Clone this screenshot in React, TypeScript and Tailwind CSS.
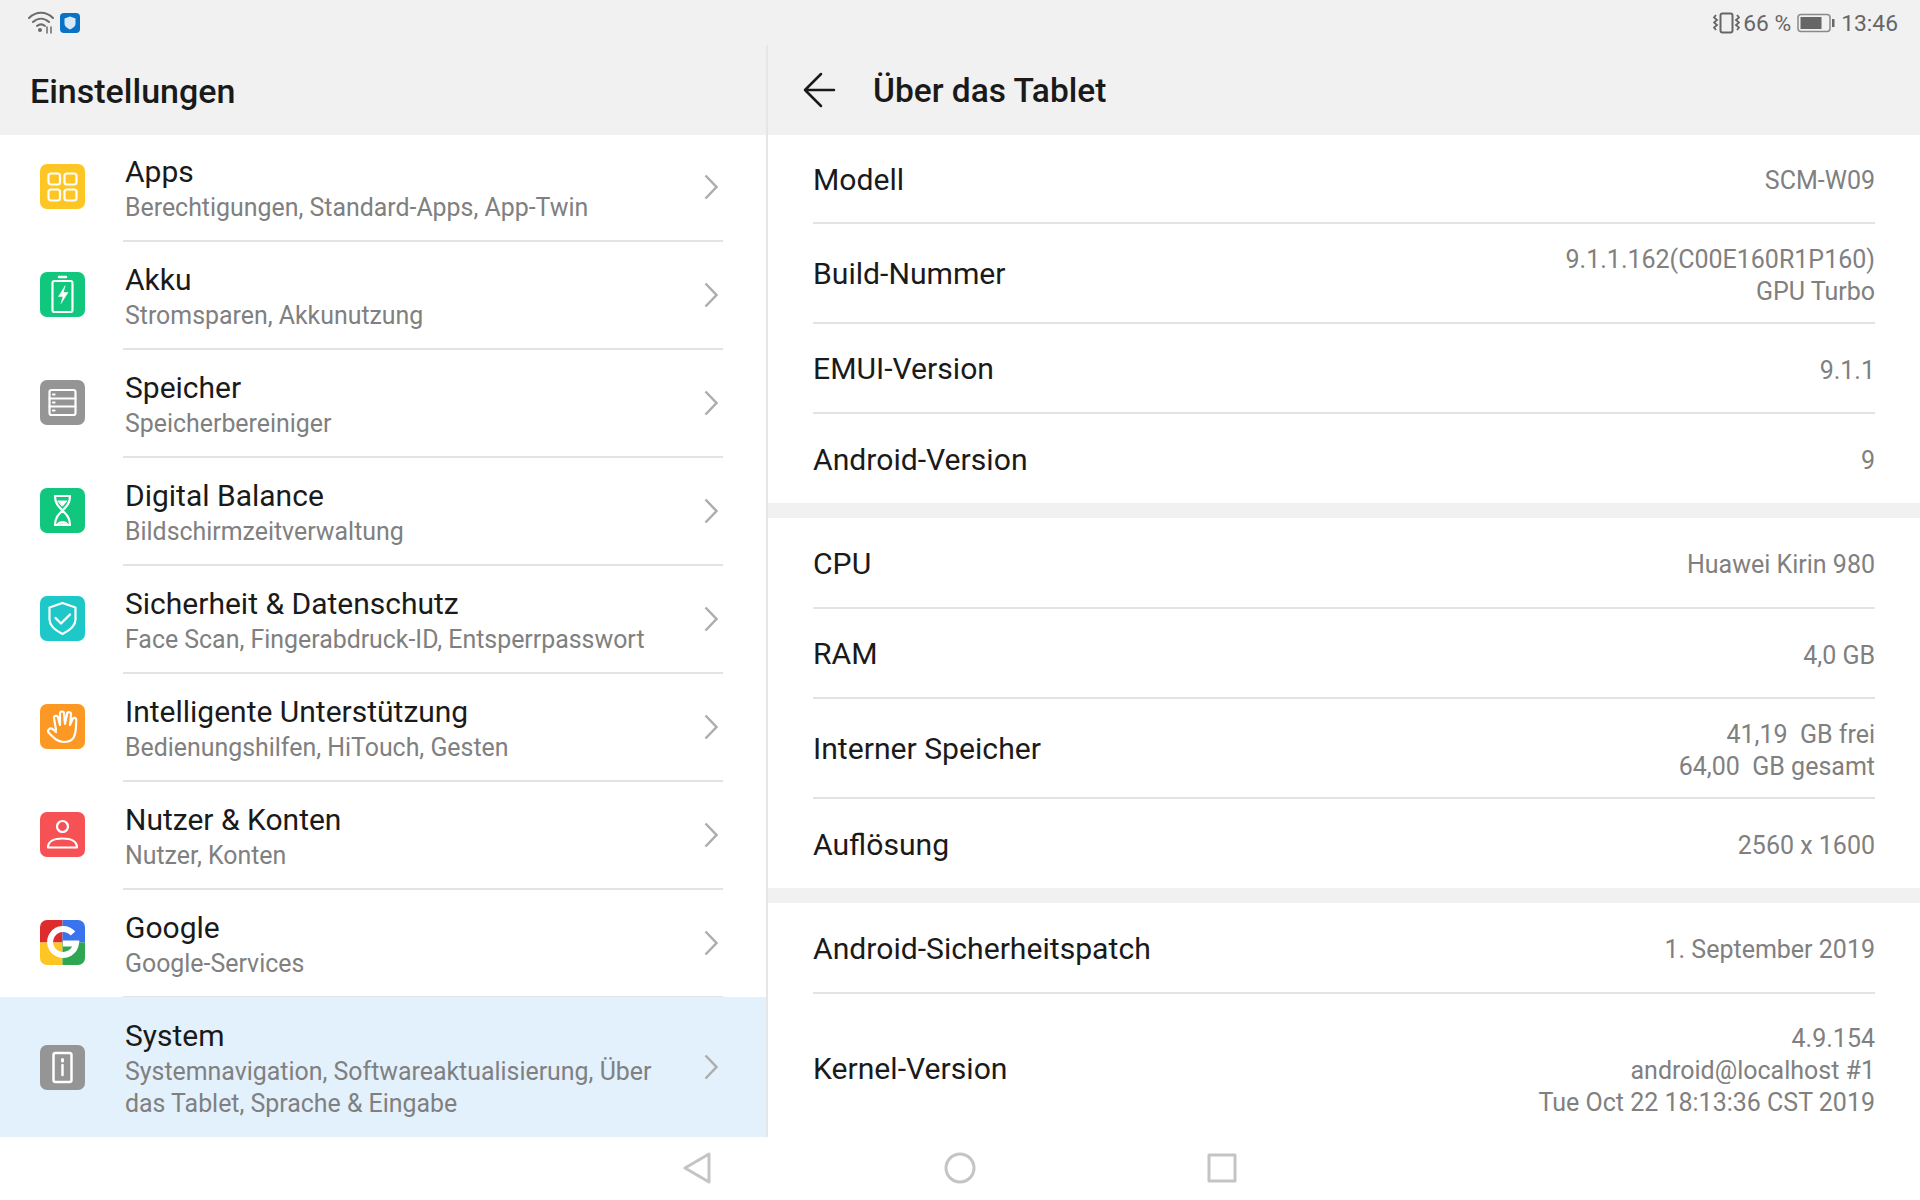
import type { ReactNode } from 'react';

const font = { fontFamily: 'Roboto, sans-serif' };

const Glyph = ({ children, bg }: { children: ReactNode; bg?: string }) => (
  <div className={`w-[45px] h-[45px] rounded-[7px] shrink-0 overflow-hidden ${bg ?? ''}`}>
    <svg viewBox="0 0 45 45" width="45" height="45" fill="none" stroke="#fff" strokeWidth="2.2" strokeLinecap="round" strokeLinejoin="round">
      {children}
    </svg>
  </div>
);

const settings = [
  {
    title: 'Apps',
    sub: 'Berechtigungen, Standard-Apps, App-Twin',
    icon: (
      <Glyph bg="bg-[#fdc624]">
        <rect x="8.5" y="9.500" width="11.500" height="11" rx="2.500" />
        <rect x="24.500" y="9.500" width="12" height="11" rx="2.500" />
        <rect x="8.5" y="25.500" width="11.500" height="11" rx="2.500" />
        <rect x="24.500" y="25.500" width="12" height="11" rx="2.500" />
      </Glyph>
    ),
  },
  {
    title: 'Akku',
    sub: 'Stromsparen, Akkunutzung',
    icon: (
      <Glyph bg="bg-[#11c77d]">
        <path d="M19 5h7" strokeWidth="2.500" />
        <rect x="12.500" y="9" width="20" height="31" rx="2" />
        <path d="M25 14l-6.500 10.500h4.500l-2 7 7-11h-4.500z" fill="#fff" strokeWidth="0.5" />
      </Glyph>
    ),
  },
  {
    title: 'Speicher',
    sub: 'Speicherbereiniger',
    icon: (
      <Glyph bg="bg-[#959595]">
        <rect x="9.500" y="10" width="26" height="25" rx="2" />
        <path d="M9.500 18.500h26M9.500 26.500h26" />
        <path d="M13 14.500h1.500M13 22.500h1.500M13 30.500h1.500" />
      </Glyph>
    ),
  },
  {
    title: 'Digital Balance',
    sub: 'Bildschirmzeitverwaltung',
    icon: (
      <Glyph bg="bg-[#11c77d]">
        <path d="M15 8h15M15 37h15" />
        <path d="M15 8c0 7 3 10 7.500 14.500C27 18 30 15 30 8M15 37c0-7 3-10 7.500-14.500C27 27 30 30 30 37" />
        <path d="M18 13h9l-4.500 5zM17.500 35.500c1-2.500 9-2.500 10 0z" fill="#fff" strokeWidth="1" />
      </Glyph>
    ),
  },
  {
    title: 'Sicherheit & Datenschutz',
    sub: 'Face Scan, Fingerabdruck-ID, Entsperrpasswort',
    icon: (
      <Glyph bg="bg-[#1fc8c8]">
        <path d="M22.500 7l13 4.500v12c0 7-6 11-13 14.500-7-3.500-13-7.500-13-14.500v-12z" />
        <path d="M15.500 22l5.500 5.500 9-9" strokeWidth="2.400" />
      </Glyph>
    ),
  },
  {
    title: 'Intelligente Unterstützung',
    sub: 'Bedienungshilfen, HiTouch, Gesten',
    icon: (
      <Glyph bg="bg-[#fc9824]">
        <path d="M16 26L14 14a2 2 0 0 1 4-.5L20 21V9.500a2 2 0 0 1 4 0L25 20l2-10a2 2 0 0 1 4 .5L30 21l2.500-6a2 2 0 0 1 3.800 1C36 22 36 26 35 30c-1 5-5 8-11 8-6 0-9-3-12-6l-3.500-3.500C7 26 10 23.500 12.500 25l3.500 3" />
      </Glyph>
    ),
  },
  {
    title: 'Nutzer & Konten',
    sub: 'Nutzer, Konten',
    icon: (
      <Glyph bg="bg-[#f65256]">
        <circle cx="22.500" cy="14.500" r="5.500" />
        <path d="M8 35.500c0-6 6-9 14.500-9s14.500 3 14.500 9z" />
      </Glyph>
    ),
  },
  {
    title: 'Google',
    sub: 'Google-Services',
    icon: (
      <Glyph>
        <rect width="22.500" height="22.500" fill="#de2c2c" stroke="none" />
        <rect x="22.500" width="22.500" height="22.500" fill="#3a73ee" stroke="none" />
        <rect y="22.500" width="22.500" height="22.500" fill="#fdc624" stroke="none" />
        <rect x="22.500" y="22.500" width="22.500" height="22.500" fill="#2fa651" stroke="none" />
        <path d="M33 13.500a13 13 0 1 0 3 10h-13" strokeWidth="6" strokeLinecap="butt" strokeLinejoin="miter" />
      </Glyph>
    ),
  },
];

const Chevron = () => (
  <svg width="14" height="26" viewBox="0 0 14 26" fill="none" stroke="#adadad" strokeWidth="2.500" className="shrink-0">
    <path d="M1.500 1.500L12.500 13L1.500 24.500" />
  </svg>
);

const SettingsRow = ({ title, sub, icon }: { title: string; sub: string; icon: ReactNode }) => (
  <div className="flex items-center h-[108px] pl-[40px]">
    <div className="pb-[3px]">{icon}</div>
    <div className="ml-[38px] mr-[43px] flex-1 h-full flex items-center border-b-2 border-[#e3e3e3]">
      <div className="flex-1 pl-[2px] pt-[4px]">
        <div className="text-[30px] leading-[38px] text-[#1a1a1a]">{title}</div>
        <div className="text-[24.9px] leading-[34px] text-[#808080]">{sub}</div>
      </div>
      <div className="pb-[1px]">
        <Chevron />
      </div>
      <div className="w-[5px]" />
    </div>
  </div>
);

const InfoRow = ({ label, values, h, last }: { label: string; values: string[]; h: string; last?: boolean }) => (
  <div className={`flex items-center justify-between ml-[45px] mr-[45px] ${h} ${last ? '' : 'border-b-2 border-[#e3e3e3]'}`}>
    <span className="text-[30.15px] text-[#1a1a1a] pt-[2px]">{label}</span>
    <div className="text-right text-[25px] leading-[32px] text-[#808080] pt-[5px]">
      {values.map((v) => (
        <div key={v} className="whitespace-pre">{v}</div>
      ))}
    </div>
  </div>
);

const Gap = () => <div className="h-[15px] bg-[#f1f1f1]" />;

export default function App() {
  return (
    <div className="w-[1920px] h-[1200px] flex flex-col bg-white overflow-hidden" style={font}>
      <div className="h-[45px] shrink-0 bg-[#f1f1f1] flex items-center justify-between pl-[28px] pr-[22px]">
        <div className="flex items-center gap-[6px]">
          <svg width="26" height="24" viewBox="0 0 26 24" fill="none" stroke="#6b6b6b" strokeWidth="2" strokeLinecap="round">
            <path d="M1 7c7-7 17-7 24 0M5 11c5-4.500 11-4.500 16 0M9 15c2.500-2 5.500-2 8 0" />
            <circle cx="12" cy="19" r="2" fill="#6b6b6b" stroke="none" />
            <path d="M19 16v6M23 16v6" strokeWidth="1.500" />
          </svg>
          <svg width="20" height="20" viewBox="0 0 20 20">
            <rect width="20" height="20" rx="4" fill="#0a72c4" />
            <path d="M10 3.500l5.500 2v5c0 3-2.500 4.500-5.500 6-3-1.500-5.500-3-5.500-6v-5z" fill="#d6e9f8" />
          </svg>
        </div>
        <div className="flex items-center text-[#666] text-[22.8px] pt-[3px]">
          <svg width="27" height="22" viewBox="0 0 27 22" fill="none" stroke="#666" strokeWidth="2" className="-mt-[3px]">
            <rect x="7.500" y="1.500" width="12" height="19" rx="2" />
            <path d="M3 3l-2 2.500 3 2.500-3 2.500 3 2.500-3 2.500 2 2.500M24 3l2 2.500-3 2.500 3 2.500-3 2.500 3 2.500-2 2.500" strokeWidth="1.800" />
          </svg>
          <span className="ml-[3px]">66 %</span>
          <svg width="38" height="20" viewBox="0 0 38 20" className="ml-[6px] -mt-[3px]" fill="none">
            <rect x="1" y="1.500" width="32" height="17" rx="3" stroke="#8a8a8a" strokeWidth="1.500" />
            <rect x="3.500" y="4" width="21" height="12" fill="#666" />
            <rect x="35" y="6" width="2.500" height="8" fill="#666" />
          </svg>
          <span className="ml-[6px]">13:46</span>
        </div>
      </div>

      <div className="flex flex-1 min-h-0">
        <div className="w-[768px] shrink-0 flex flex-col border-r-2 border-[#e6e6e6]">
          <div className="relative h-[90px] shrink-0 bg-[#f1f1f1] flex items-center pl-[30px] pt-[2px]">
            <h1 className="text-[34px] font-medium text-[#1a1a1a]">Einstellungen</h1>
          </div>
          <div className="flex-1 flex flex-col -mt-[1px]">
            {settings.map((s) => (
              <SettingsRow key={s.title} {...s} />
            ))}
            <div className="flex-1 flex items-center bg-[#e3f1fd] pl-[40px] -mt-[1px]">
              <Glyph bg="bg-[#959595]">
                <rect x="13.500" y="8" width="18" height="29" rx="2" strokeWidth="2.500" />
                <path d="M22.500 20v10" strokeWidth="2.500" />
                <path d="M22.500 14.500v1.500" strokeWidth="3" />
              </Glyph>
              <div className="ml-[40px] flex-1 pt-[2px]">
                <div className="text-[30px] leading-[40px] text-[#1a1a1a]">System</div>
                <div className="text-[24.9px] leading-[32px] text-[#808080] w-[560px]">
                  Systemnavigation, Softwareaktualisierung, Über das Tablet, Sprache &amp; Eingabe
                </div>
              </div>
              <Chevron />
              <div className="w-[48px]" />
            </div>
          </div>
        </div>

        <div className="flex-1 flex flex-col min-w-0">
          <div className="h-[90px] shrink-0 bg-[#f1f1f1] flex items-center pl-[33px]">
            <svg width="36" height="36" viewBox="0 0 36 36" fill="none" stroke="#1a1a1a" strokeWidth="2.500" strokeLinecap="round" strokeLinejoin="round">
              <path d="M33 18H4M20 2L4 18l16 16" />
            </svg>
            <h1 className="ml-[36px] pt-[3px] text-[33.5px] font-medium text-[#1a1a1a]">Über das Tablet</h1>
          </div>
          <InfoRow label="Modell" values={['SCM-W09']} h="h-[89px]" />
          <InfoRow label="Build-Nummer" values={['9.1.1.162(C00E160R1P160)', 'GPU Turbo']} h="h-[100px]" />
          <InfoRow label="EMUI-Version" values={['9.1.1']} h="h-[90px]" />
          <InfoRow label="Android-Version" values={['9']} h="h-[89px]" last />
          <Gap />
          <InfoRow label="CPU" values={['Huawei Kirin 980']} h="h-[91px]" />
          <InfoRow label="RAM" values={['4,0 GB']} h="h-[90px]" />
          <InfoRow label="Interner Speicher" values={['41,19  GB frei', '64,00  GB gesamt']} h="h-[100px]" />
          <InfoRow label="Auflösung" values={['2560 x 1600']} h="h-[89px]" last />
          <Gap />
          <InfoRow label="Android-Sicherheitspatch" values={['1. September 2019']} h="h-[91px]" />
          <InfoRow
            label="Kernel-Version"
            values={['4.9.154', 'android@localhost #1', 'Tue Oct 22 18:13:36 CST 2019']}
            h="flex-1 pt-[5px]"
            last
          />
        </div>
      </div>

      <div className="h-[63px] shrink-0 bg-white flex items-center justify-center gap-[231px] pb-[1px]">
        <svg width="30" height="32" viewBox="0 0 30 32" fill="none" stroke="#c4c4c4" strokeWidth="3" strokeLinejoin="round">
          <path d="M26 2v28L2 16z" />
        </svg>
        <svg width="32" height="32" viewBox="0 0 32 32" fill="none" stroke="#c4c4c4" strokeWidth="3">
          <circle cx="16" cy="16" r="14" />
        </svg>
        <svg width="30" height="30" viewBox="0 0 30 30" fill="none" stroke="#c4c4c4" strokeWidth="3" strokeLinejoin="round">
          <rect x="2" y="2" width="26" height="26" />
        </svg>
      </div>
    </div>
  );
}
